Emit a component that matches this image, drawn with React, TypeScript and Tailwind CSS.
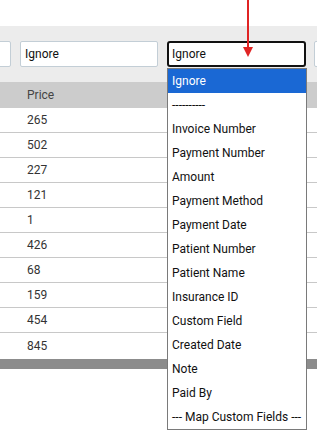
import React from "react";

const prices = [265, 502, 227, 121, 1, 426, 68, 159, 454, 845];

const options = [
  "Ignore",
  "----------",
  "Invoice Number",
  "Payment Number",
  "Amount",
  "Payment Method",
  "Payment Date",
  "Patient Number",
  "Patient Name",
  "Insurance ID",
  "Custom Field",
  "Created Date",
  "Note",
  "Paid By",
  "--- Map Custom Fields ---",
];

export default function App() {
  return (
    <div className="relative w-[317px] h-[437px] overflow-hidden bg-white font-['Roboto',sans-serif] text-[12px]">
      <div className="h-[26px]" />

      {/* mapping selects row */}
      <div className="h-[56px] bg-[#ececec] flex items-center gap-[9px] -ml-[128px]">
        <div className="w-[139px] h-[26px] shrink-0 bg-white border border-[#c3ced6] rounded-[2px]" />
        <div className="w-[138px] h-[26px] shrink-0 bg-white border border-[#c3ced6] rounded-[2px] flex items-center pl-[4px] text-[#111]">
          Ignore
        </div>
        <div className="w-[139px] h-[26px] shrink-0 bg-white border-2 border-[#111] rounded-[3px] flex items-center pl-[3px] text-[#111]">
          Ignore
        </div>
        <div className="w-[139px] h-[26px] shrink-0 bg-white border border-[#c3ced6] rounded-[2px] -ml-px" />
      </div>

      {/* table */}
      <div className="h-[26px] bg-[#cccccc] flex items-center pl-[27px] text-[#444]">Price</div>
      {prices.map((p, i) => (
        <div
          key={i}
          className={`h-[25px] flex items-center pl-[27px] text-[#333] ${i < prices.length - 1 ? "border-b border-[#c8c8c8]" : ""}`}
        >
          {p}
        </div>
      ))}
      <div className="h-px" />
      <div className="h-[10px] bg-[#8c8c8c]" />

      {/* open dropdown */}
      <div className="absolute left-[167px] top-[68px] w-[140px] bg-white border border-[#7a7a7a]">
        {options.map((o, i) => (
          <div
            key={o}
            className={`h-[24px] flex items-center pl-[4px] whitespace-nowrap ${i === 0 ? "bg-[#1a68d4] text-white" : "text-[#111]"}`}
          >
            {o}
          </div>
        ))}
      </div>

      {/* red pointer arrow */}
      <svg className="absolute left-[242px] top-0" width="12" height="58" viewBox="0 0 12 58">
        <line x1="6" y1="0" x2="6" y2="49" stroke="#e02424" strokeWidth="2" />
        <polygon points="1,47 11,47 6,57" fill="#e02424" />
      </svg>
    </div>
  );
}
